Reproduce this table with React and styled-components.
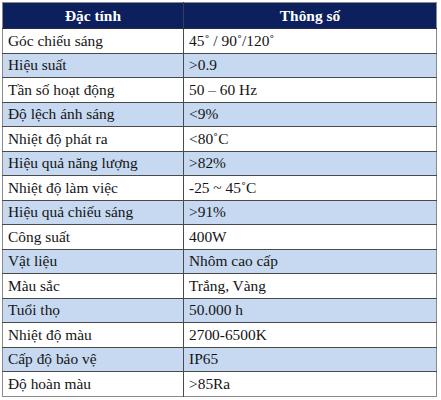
import React from "react";
import styled, { createGlobalStyle } from "styled-components";

const Global = createGlobalStyle`
  html, body { margin: 0; padding: 0; background: #fff; }
  body { font-family: 'Liberation Serif', Tinos, 'DejaVu Serif', serif; }
`;

const Wrap = styled.div`
  padding: 2px 0 0 2px;
  font-family: 'Liberation Serif', Tinos, 'DejaVu Serif', serif;
`;

const Table = styled.table`
  width: 435px;
  border-collapse: collapse;
  table-layout: fixed;
  font-family: inherit;
  font-size: 15.4px;
  color: #141414;
  border: 1px solid #8a8a8a;
`;

const HeadCell = styled.th`
  background: #0c205e;
  color: #fff;
  font-weight: bold;
  font-family: inherit;
  text-align: center;
  height: 25px;
  padding: 0;
  border-left: 1px solid #3a3a5a;
  border-bottom: 1px solid #2a2a3a;
  &:first-child { border-left: none; }
`;

const Row = styled.tr`
  background: ${(p) => (p.$alt ? "#c6d9f0" : "#fff")};
  height: 24.5px;
`;

const Cell = styled.td`
  padding: 0 0 0 5px;
  font-family: inherit;
  border-top: 1px solid #4a4a4a;
  border-left: 1px solid #4a4a4a;
  white-space: nowrap;
  vertical-align: middle;
  &:first-child { border-left: none; }
`;

const rows = [
  ["Góc chiếu sáng", "45˚ / 90˚/120˚"],
  ["Hiệu suất", ">0.9"],
  ["Tần số hoạt động", "50 – 60 Hz"],
  ["Độ lệch ánh sáng", "<9%"],
  ["Nhiệt độ phát ra", "<80˚C"],
  ["Hiệu quả năng lượng", ">82%"],
  ["Nhiệt độ làm việc", "-25 ~ 45˚C"],
  ["Hiệu quả chiếu sáng", ">91%"],
  ["Công suất", "400W"],
  ["Vật liệu", "Nhôm cao cấp"],
  ["Màu sắc", "Trắng, Vàng"],
  ["Tuổi thọ", "50.000 h"],
  ["Nhiệt độ màu", "2700-6500K"],
  ["Cấp độ bảo vệ", "IP65"],
  ["Độ hoàn màu", ">85Ra"],
];

export default function App() {
  return (
    <Wrap>
      <Global />
      <Table>
        <colgroup>
          <col style={{ width: "181px" }} />
          <col />
        </colgroup>
        <thead>
          <tr>
            <HeadCell>Đặc tính</HeadCell>
            <HeadCell>Thông số</HeadCell>
          </tr>
        </thead>
        <tbody>
          {rows.map(([a, b], i) => (
            <Row key={a} $alt={i % 2 === 1}>
              <Cell>{a}</Cell>
              <Cell>{b}</Cell>
            </Row>
          ))}
        </tbody>
      </Table>
    </Wrap>
  );
}
